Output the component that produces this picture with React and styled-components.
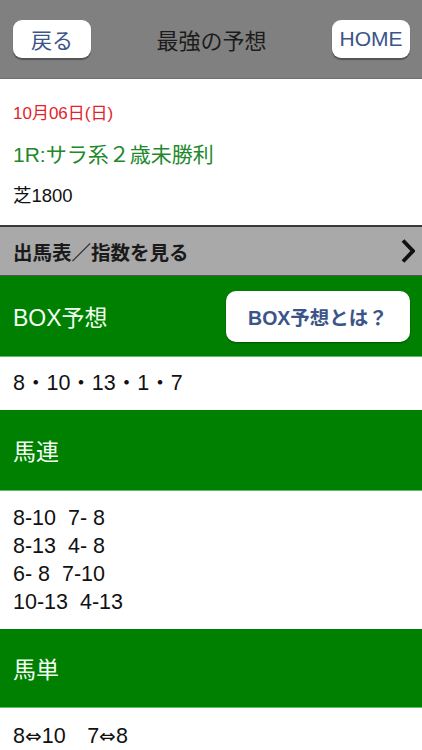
import React from 'react';
import styled, { createGlobalStyle } from 'styled-components';

const GlobalStyle = createGlobalStyle`
    html, body {
        margin: 0;
        padding: 0;
        background: #ffffff;
    }
    body {
        font-family: "Liberation Sans", "Noto Sans CJK JP", sans-serif;
        color: #111111;
    }
`;

const Screen = styled.div`
    width: 422px;
    height: 750px;
    overflow: hidden;
    background: white;
`;

const NavBar = styled.header`
    display: flex;
    align-items: center;
    justify-content: space-between;
    height: 79px;
    padding: 0 12px 0 13px;
    box-sizing: border-box;
    background: #808080;
    border-bottom: 1px solid #6f6f6f;
`;

const NavButton = styled.button`
    width: 78px;
    height: 38px;
    padding: 0;
    background: white;
    border: none;
    border-radius: 9px;
    box-shadow: 0 1.5px 1px rgba(0,0,0,.35);
    color: #3c5589;
    font-family: inherit;
    font-size: 21px;
`;

const NavTitle = styled.h1`
    margin: 0;
    font-size: 22px;
    font-weight: normal;
    color: #1c1c1c;
`;

const RaceInfo = styled.section`
    display: flex;
    flex-direction: column;
    gap: 15px;
    height: 146px;
    padding: 23px 13px 0;
    box-sizing: border-box;
`;

const InfoLine = styled.p`
    margin: 0;
    line-height: ${p => p.$lh || 24}px;
    font-size: ${p => p.$size || 17}px;
    color: ${p => p.$color || '#111'};
`;

const LinkBar = styled.div`
    display: flex;
    align-items: center;
    justify-content: space-between;
    height: 51px;
    padding: 0 7px 0 13px;
    box-sizing: border-box;
    background: #a9a9a9;
    border-top: 2px solid #3a3a3a;
    border-bottom: 1px solid #555;
    font-size: 19.5px;
    font-weight: bold;
    color: #1a1a1a;
`;

const SectionHead = styled.div`
    display: flex;
    align-items: center;
    justify-content: space-between;
    height: ${p => p.$h || 81}px;
    padding: 0 12px 0 13px;
    box-sizing: border-box;
    background: #008000;
    border-bottom: 1px solid #5cc05c;
    color: #f2fff2;
    font-size: 23px;
`;

const InfoButton = styled.button`
    width: 184px;
    height: 51px;
    padding: 0;
    background: white;
    border: none;
    border-radius: 10px;
    box-shadow: 0 1px 2px rgba(0,0,0,.35);
    color: #3c5589;
    font-family: inherit;
    font-size: 19.5px;
    font-weight: bold;
`;

const SectionBody = styled.div`
    padding: ${p => p.$pad || '13px 13px'};
    font-size: 21.5px;
    line-height: 28px;
    color: #111;
    min-height: ${p => p.$min || 0}px;
    box-sizing: border-box;
    white-space: pre;
`;

const Arrow = styled.span`
    font-family: "DejaVu Sans", sans-serif;
    font-size: 20px;
`;

const Chevron = () => (
    <svg width="14" height="26" viewBox="0 0 14 26">
        <path d="M2 2.5 L12 13 L2 23.5" fill="none" stroke="#111" strokeWidth="3.8" strokeLinejoin="miter" />
    </svg>
);

function App() {
    const umaren = ['8-10  7- 8', '8-13  4- 8', '6- 8  7-10', '10-13  4-13'];

    return (
        <Screen>
            <GlobalStyle />
            <NavBar>
                <NavButton>戻る</NavButton>
                <NavTitle>最強の予想</NavTitle>
                <NavButton>HOME</NavButton>
            </NavBar>

            <RaceInfo>
                <InfoLine $color="#e3232b">10月06日(日)</InfoLine>
                <InfoLine $size={21} $lh={28} $color="#21892b">1R:サラ系２歳未勝利</InfoLine>
                <InfoLine $size={18.5}>芝1800</InfoLine>
            </RaceInfo>

            <LinkBar>
                出馬表／指数を見る
                <Chevron />
            </LinkBar>

            <SectionHead>
                BOX予想
                <InfoButton>BOX予想とは？</InfoButton>
            </SectionHead>
            <SectionBody $pad="12px 13px 12px" $min={53}>8・10・13・1・7</SectionBody>

            <SectionHead>馬連</SectionHead>
            <SectionBody $pad="13px 13px 12px" $min={138}>
                {umaren.join('\n')}
            </SectionBody>

            <SectionHead $h={79}>馬単</SectionHead>
            <SectionBody $pad="14px 13px">8<Arrow>⇔</Arrow>10　7<Arrow>⇔</Arrow>8</SectionBody>
        </Screen>
    );
}

export default App;
